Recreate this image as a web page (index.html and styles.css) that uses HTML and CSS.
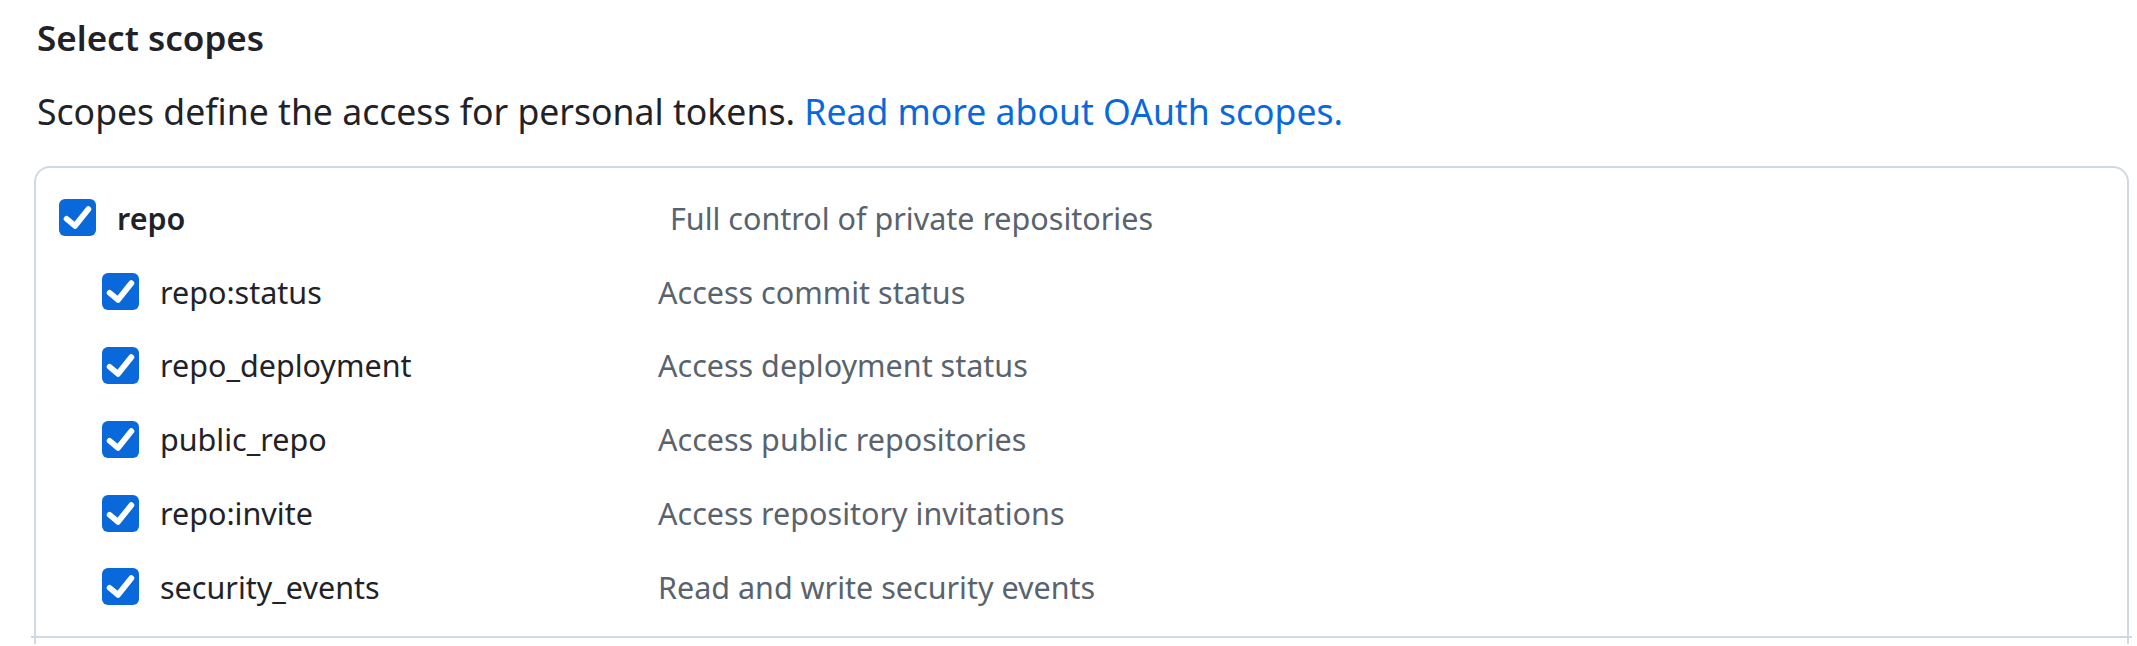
FILE: index.html
```html
<!DOCTYPE html>
<html lang="en">
<head>
  <meta charset="UTF-8">
  <title>Select scopes</title>
  <link rel="stylesheet" href="styles.css">
</head>
<body>
  <div class="page">
    <h2 class="title">Select scopes</h2>
    <p class="lead">Scopes define the access for personal tokens. <a href="javascript:;">Read more about OAuth scopes.</a></p>

    <div class="scopes">
      <div class="scope-group">
        <div class="scope-row top">
          <span class="check"><svg viewBox="0 0 16 16"><polyline points="3.3,8.6 6.9,11.6 12.7,4.4"/></svg></span>
          <span class="scope-name">repo</span>
          <span class="scope-desc">Full control of private repositories</span>
        </div>
        <div class="scope-row sub">
          <span class="check"><svg viewBox="0 0 16 16"><polyline points="3.3,8.6 6.9,11.6 12.7,4.4"/></svg></span>
          <span class="scope-name">repo:status</span>
          <span class="scope-desc">Access commit status</span>
        </div>
        <div class="scope-row sub">
          <span class="check"><svg viewBox="0 0 16 16"><polyline points="3.3,8.6 6.9,11.6 12.7,4.4"/></svg></span>
          <span class="scope-name">repo_deployment</span>
          <span class="scope-desc">Access deployment status</span>
        </div>
        <div class="scope-row sub">
          <span class="check"><svg viewBox="0 0 16 16"><polyline points="3.3,8.6 6.9,11.6 12.7,4.4"/></svg></span>
          <span class="scope-name">public_repo</span>
          <span class="scope-desc">Access public repositories</span>
        </div>
        <div class="scope-row sub">
          <span class="check"><svg viewBox="0 0 16 16"><polyline points="3.3,8.6 6.9,11.6 12.7,4.4"/></svg></span>
          <span class="scope-name">repo:invite</span>
          <span class="scope-desc">Access repository invitations</span>
        </div>
        <div class="scope-row sub">
          <span class="check"><svg viewBox="0 0 16 16"><polyline points="3.3,8.6 6.9,11.6 12.7,4.4"/></svg></span>
          <span class="scope-name">security_events</span>
          <span class="scope-desc">Read and write security events</span>
        </div>
      </div>
      <div class="scope-group next"></div>
    </div>
  </div>
</body>
</html>
```

FILE: styles.css
```css
*{
  margin: 0;
  padding: 0;
  box-sizing: border-box;
}
html, body{
  height: 100%;
  overflow: hidden;
  background-color: #ffffff;
}
body{
  font-family: "Noto Sans", "Open Sans", sans-serif;
  color: #1f2328;
}
.page{
  padding: 16px 8px 0 34px;
}
.title{
  font-size: 35px;
  font-weight: 600;
  line-height: 44px;
  padding-left: 3px;
}
.lead{
  font-size: 35.6px;
  line-height: 48px;
  margin-top: 27px;
  padding-left: 3px;
}
.lead a{
  color: #0969da;
  text-decoration: none;
}
.scopes{
  margin-top: 31px;
  border: 2px solid #d1d9e0;
  border-bottom: none;
  border-radius: 16px 16px 0 0;
}
.scope-group{
  padding: 13px 0 12px;
}
.scope-group.next{
  height: 8px;
  padding: 0;
  border-top: 2px solid #d1d9e0;
  margin: 0 -5px;
}
.scope-row{
  display: flex;
  align-items: center;
  height: 73.8px;
  font-size: 30.5px;
}
.scope-row.top{
  padding-left: 23px;
}
.scope-row.sub{
  padding-left: 66px;
}
.check{
  flex: none;
  width: 37px;
  height: 37px;
  border-radius: 6px;
  background-color: #0969da;
  display: flex;
}
.check svg{
  width: 100%;
  height: 100%;
  fill: none;
  stroke: #ffffff;
  stroke-width: 2.5;
  stroke-linecap: round;
  stroke-linejoin: round;
}
.scope-name{
  flex: none;
  margin-left: 21px;
}
.top .scope-name{
  width: 553px;
  font-weight: 600;
}
.sub .scope-name{
  width: 498px;
}
.scope-desc{
  color: #59636e;
}
```
